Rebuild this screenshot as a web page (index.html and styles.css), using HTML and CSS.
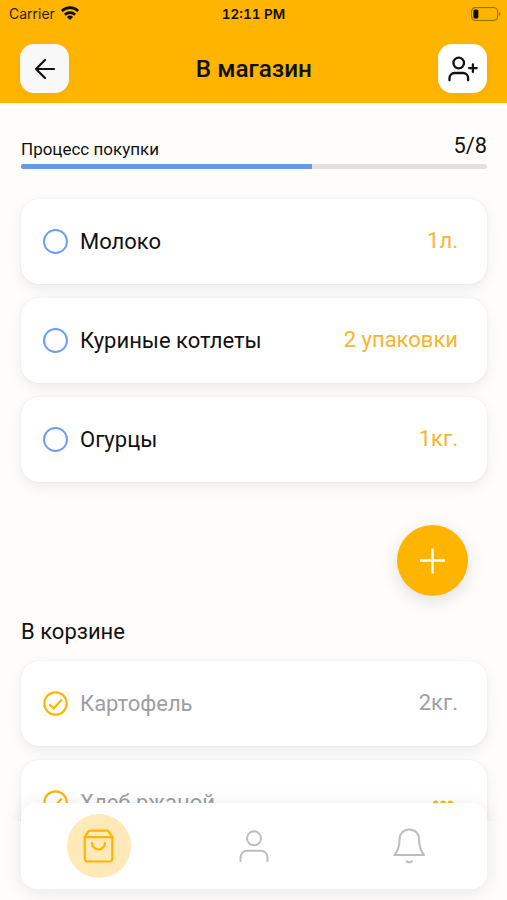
FILE: index.html
```html
<!-- index.html -->
<!DOCTYPE html>
<html lang="ru">
<head>
    <meta charset="UTF-8">
    <meta name="viewport" content="width=device-width, initial-scale=1.0">
    <title>В магазин</title>
    <link rel="stylesheet" href="styles.css">
</head>
<body>
    <header class="header">
        <div class="status-bar">
            <div class="carrier">
                <span>Carrier</span>
                <svg class="wifi" viewBox="0 0 18 14" width="18" height="14" fill="none" stroke="#120d00" stroke-width="2.7">
                    <path d="M.8 5a11.600 11.600 0 0 1 16.400 0"/>
                    <path d="M3.900 8.700a7.400 7.400 0 0 1 10.200 0"/>
                    <path d="M9 14L5.900 11a4.500 4.500 0 0 1 6.200 0z" fill="#120d00" stroke="none"/>
                </svg>
            </div>
            <div class="time">12:11 PM</div>
            <svg class="battery" viewBox="0 0 30 14" width="30" height="14">
                <rect x="0.6" y="0.6" width="26" height="12.800" rx="3.400" fill="none" stroke="#8d6500" stroke-width="1"/>
                <rect x="2.400" y="2.600" width="5" height="8.800" rx="1.500" fill="#120d00"/>
                <path d="M28 4.800v4.400c1.800-.7 1.800-3.700 0-4.400z" fill="#8d6500"/>
            </svg>
        </div>
        <div class="nav">
            <button class="nav-button">
                <svg viewBox="0 0 22 22" width="22" height="22" fill="none" stroke="#111" stroke-width="2.2" stroke-linecap="round" stroke-linejoin="round">
                    <path d="M20 11H2M11 2L2 11l9 9"/>
                </svg>
            </button>
            <h1>В магазин</h1>
            <button class="nav-button white">
                <svg viewBox="0 0 30 26" width="30" height="26" fill="none" stroke="#111" stroke-width="2.3" stroke-linecap="round">
                    <circle cx="10.7" cy="7" r="5.3"/>
                    <path d="M1.500 24.300v-2.300a5 5 0 0 1 5-5h8.600a5 5 0 0 1 5 5v2.300"/>
                    <path d="M24.900 8.300v7.600M21.100 12.100h7.600"/>
                </svg>
            </button>
        </div>
    </header>

    <main class="content">
        <div class="progress-info">
            <span class="progress-label">Процесс покупки</span>
            <span class="progress-count">5/8</span>
        </div>
        <div class="progress"><div class="progress-fill" style="width: 62.5%"></div></div>

        <div class="list">
            <div class="card">
                <span class="circle"></span>
                <span class="name">Молоко</span>
                <span class="amount">1л.</span>
            </div>
            <div class="card">
                <span class="circle"></span>
                <span class="name">Куриные котлеты</span>
                <span class="amount">2 упаковки</span>
            </div>
            <div class="card">
                <span class="circle"></span>
                <span class="name">Огурцы</span>
                <span class="amount">1кг.</span>
            </div>
        </div>

        <button class="add-button">
            <svg viewBox="0 0 26 26" width="26" height="26" stroke="#fff" stroke-width="2.4">
                <path d="M12.500 .5v25M0 12.500h25"/>
            </svg>
        </button>

        <h2>В корзине</h2>
        <div class="list">
            <div class="card done">
                <svg class="check" viewBox="0 0 25 25" width="25" height="25" fill="none" stroke="#ffb400" stroke-width="2.2">
                    <circle cx="12.500" cy="12.500" r="11.200"/>
                    <path d="M6.300 13.200l4.300 4.200 8.200-8.900"/>
                </svg>
                <span class="name">Картофель</span>
                <span class="amount">2кг.</span>
            </div>
            <div class="card done">
                <svg class="check" viewBox="0 0 25 25" width="25" height="25" fill="none" stroke="#ffb400" stroke-width="2.2">
                    <circle cx="12.500" cy="12.500" r="11.200"/>
                    <path d="M6.300 13.200l4.300 4.200 8.200-8.900"/>
                </svg>
                <span class="name">Хлеб ржаной</span>
                <svg class="more" viewBox="0 0 20 6" width="20" height="6" fill="#ffb400">
                    <circle cx="2.700" cy="3" r="2.600"/>
                    <circle cx="10" cy="3" r="2.600"/>
                    <circle cx="17.300" cy="3" r="2.600"/>
                </svg>
            </div>
        </div>
    </main>

    <nav class="tab-bar">
        <a class="tab active">
            <svg viewBox="0 0 32 34" width="32" height="34" fill="none" stroke="#ffb400" stroke-width="2.2" stroke-linejoin="round" stroke-linecap="round">
                <path d="M1.700 8v21.500a3 3 0 0 0 3 3h21.600a3 3 0 0 0 3-3V8"/>
                <path d="M1.700 8.200L5.300 2.600a2.400 2.400 0 0 1 2-1h16.400a2.400 2.400 0 0 1 2 1l3.600 5.600z"/>
                <path d="M9 14a6.500 6.500 0 0 0 13 0"/>
            </svg>
        </a>
        <a class="tab">
            <svg viewBox="0 0 30 34" width="30" height="34" fill="none" stroke="#bdbdbd" stroke-width="2" stroke-linecap="round">
                <circle cx="15" cy="9.300" r="7"/>
                <path d="M1.500 32v-3.800a6.500 6.500 0 0 1 6.500-6.500h14a6.500 6.500 0 0 1 6.500 6.500V32"/>
            </svg>
        </a>
        <a class="tab">
            <svg viewBox="0 0 32 36" width="32" height="36" fill="none" stroke="#bdbdbd" stroke-width="2" stroke-linecap="round" stroke-linejoin="round">
                <path d="M16.300 1.500c-6 0-9.800 4.400-9.800 10.200C6.500 18.500 5 23 1.500 27h29.600C27.600 23 26.100 18.500 26.100 11.700 26.100 5.900 22.300 1.500 16.300 1.500z"/>
                <path d="M13.500 33.200c1.300 1.600 4.300 1.600 5.600 0"/>
            </svg>
        </a>
    </nav>
</body>
</html>
```
FILE: styles.css
```css
* {
    margin: 0;
    padding: 0;
    box-sizing: border-box;
}

body {
    font-family: Roboto, sans-serif;
    background: #fefdfc;
    color: #111;
    height: 900px;
    overflow: hidden;
}

button {
    border: none;
    cursor: pointer;
}

svg {
    display: block;
    flex-shrink: 0;
}

.header {
    height: 103px;
    background: #ffb400;
}

.status-bar {
    display: grid;
    grid-template-columns: 1fr auto 1fr;
    align-items: center;
    height: 27px;
    padding: 0 6px 0 9px;
    font-family: Inter, sans-serif;
    font-size: 14px;
    color: #2b1f00;
}

.carrier {
    display: flex;
    align-items: center;
    gap: 6px;
}

.wifi {
    margin-top: -2px;
}

.time {
    padding-right: 3px;
    font-weight: 600;
    font-size: 13.5px;
    font-variant-numeric: tabular-nums;
    color: #120d00;
}

.battery {
    justify-self: end;
}

.nav {
    display: flex;
    align-items: center;
    justify-content: space-between;
    padding: 17.4px 19.6px 0 20.4px;
}

.nav-button {
    display: flex;
    align-items: center;
    justify-content: center;
    width: 49px;
    height: 49px;
    border-radius: 14px;
    background: #f8f8f8;
    box-shadow: 0 3px 10px rgba(0, 0, 0, 0.03);
}

.nav-button.white {
    background: #fff;
}

h1 {
    font-size: 24.3px;
    font-weight: 500;
    line-height: 28px;
    padding-top: 1px;
}

.content {
    height: 718px;
    padding: 29px 20px 0 21px;
    overflow: hidden;
}

.progress-info {
    display: flex;
    justify-content: space-between;
    height: 32px;
}

.progress-label {
    font-size: 17px;
    line-height: 34px;
}

.progress-count {
    font-size: 21.8px;
    line-height: 28px;
}

.progress {
    height: 5px;
    border-radius: 2px;
    background: #e2e2e2;
    overflow: hidden;
}

.progress-fill {
    height: 100%;
    background: #6898e8;
}

.list {
    display: flex;
    flex-direction: column;
    gap: 14px;
}

.progress + .list {
    margin-top: 30px;
}

.card {
    display: flex;
    align-items: center;
    height: 85px;
    padding: 0 29px 0 21.5px;
    border-radius: 18px;
    background: #fff;
    box-shadow: 0 5px 14px rgba(0, 0, 0, 0.07), 0 0 2px rgba(0, 0, 0, 0.08);
}

.circle {
    width: 25px;
    height: 25px;
    border: 2px solid #6f9eee;
    border-radius: 50%;
}

.name {
    flex: 1;
    margin-left: 12.5px;
    font-size: 22px;
}

.amount {
    margin-top: -3px;
    font-size: 22px;
    color: #f8b52a;
}

.done .name,
.done .amount {
    color: #9d9fa4;
}

.more {
    margin-right: 5px;
}

.add-button {
    display: flex;
    align-items: center;
    justify-content: center;
    width: 71px;
    height: 71px;
    margin: 43px 19px 0 auto;
    border-radius: 50%;
    background: #ffb400;
    box-shadow: 0 5px 18px rgba(0, 0, 0, 0.12);
}

h2 {
    margin: 22px 0 15px;
    font-size: 22px;
    font-weight: 400;
    line-height: 28px;
}

.tab-bar {
    position: fixed;
    left: 21px;
    right: 20px;
    bottom: 11px;
    display: flex;
    align-items: center;
    justify-content: space-around;
    height: 86px;
    border-radius: 16px;
    background: #fff;
    box-shadow: 0 3px 20px rgba(0, 0, 0, 0.09);
}

.tab {
    display: flex;
    align-items: center;
    justify-content: center;
    width: 64px;
    height: 64px;
    border-radius: 50%;
}

.tab.active {
    background: #ffe9b8;
}
```
